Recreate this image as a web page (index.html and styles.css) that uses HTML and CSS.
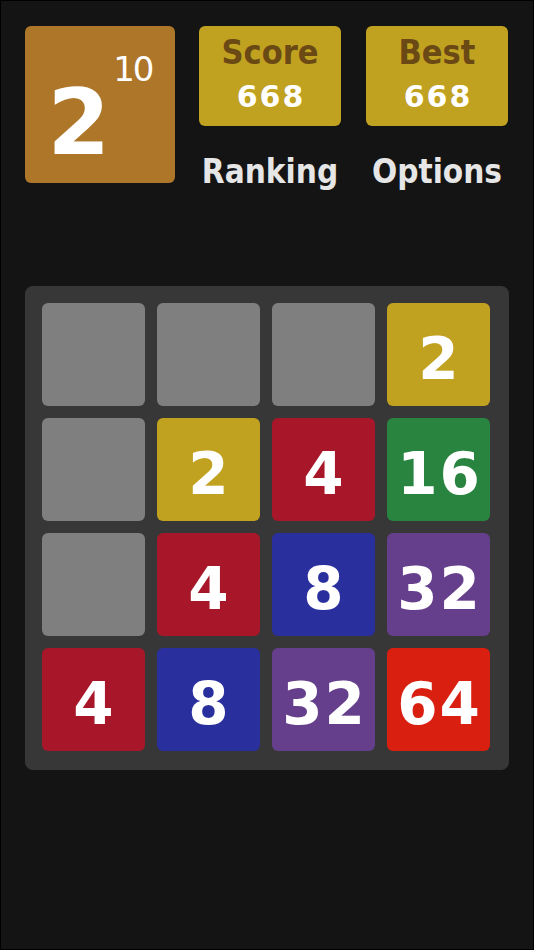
FILE: index.html
```html
<!DOCTYPE html>
<html lang="en">
<head>
    <meta charset="UTF-8">
    <meta name="viewport" content="width=device-width, initial-scale=1.0">
    <title>2048</title>
    <link rel="stylesheet" href="styles.css">
</head>
<body>
    <div class="screen">
        <div class="header">
            <div class="logo">
                <span class="logo-base">2</span>
                <span class="logo-exp">10</span>
            </div>

            <div class="stat">
                <div class="stat-box">
                    <div class="stat-label">Score</div>
                    <div class="stat-value">668</div>
                </div>
                <div class="stat-link">Ranking</div>
            </div>

            <div class="stat">
                <div class="stat-box">
                    <div class="stat-label">Best</div>
                    <div class="stat-value">668</div>
                </div>
                <div class="stat-link">Options</div>
            </div>
        </div>

        <div class="board">
            <div class="tile"></div>
            <div class="tile"></div>
            <div class="tile"></div>
            <div class="tile t2">2</div>

            <div class="tile"></div>
            <div class="tile t2">2</div>
            <div class="tile t4">4</div>
            <div class="tile t16">16</div>

            <div class="tile"></div>
            <div class="tile t4">4</div>
            <div class="tile t8">8</div>
            <div class="tile t32">32</div>

            <div class="tile t4">4</div>
            <div class="tile t8">8</div>
            <div class="tile t32">32</div>
            <div class="tile t64">64</div>
        </div>
    </div>
</body>
</html>
```

FILE: styles.css
```css
* {
    margin: 0;
    padding: 0;
    box-sizing: border-box;
}

html, body {
    background: #000;
}

body {
    font-family: 'DejaVu Sans', 'Liberation Sans', sans-serif;
    font-weight: bold;
    color: #fff;
}

.screen {
    width: 534px;
    height: 950px;
    border: 1px solid #000;
    background: #141414;
    overflow: hidden;
}

.header {
    display: flex;
    align-items: flex-start;
    margin: 25px 0 0 24px;
}

.logo {
    width: 150px;
    height: 157px;
    background: #ae7629;
    border-radius: 6px;
    display: flex;
    justify-content: center;
    align-items: flex-start;
    line-height: 1;
}

.logo-base {
    font-size: 90px;
    margin-top: 52px;
    letter-spacing: 3px;
}

.logo-exp {
    font-size: 34px;
    font-weight: normal;
    margin-top: 26px;
    letter-spacing: -2px;
}

.stat {
    width: 142px;
    margin-left: 24px;
    display: flex;
    flex-direction: column;
    align-items: center;
}

.stat + .stat {
    margin-left: 25px;
}

.stat-box {
    width: 100%;
    height: 100px;
    background: #c1a120;
    border-radius: 6px;
    display: flex;
    flex-direction: column;
    align-items: center;
    padding-top: 9px;
    line-height: 1;
}

.stat-label {
    font-family: 'DejaVu Sans Condensed', 'DejaVu Sans', sans-serif;
    font-size: 34px;
    color: #6a4915;
}

.stat-value {
    font-size: 30px;
    letter-spacing: 2px;
    padding-left: 2px;
    margin-top: 13px;
}

.stat-link {
    font-family: 'DejaVu Sans Condensed', 'DejaVu Sans', sans-serif;
    font-size: 33px;
    line-height: 1;
    color: #e6e6e6;
    margin-top: 29px;
}

.board {
    width: 484px;
    margin: 98px 0 0 24px;
    padding: 17px 19px 19px 17px;
    background: #373737;
    border-radius: 8px;
    display: grid;
    grid-template-columns: repeat(4, 1fr);
    gap: 12px;
}

.tile {
    height: 103px;
    background: #7f7f7f;
    border-radius: 6px;
    display: flex;
    justify-content: center;
    align-items: center;
    padding: 9px 0 0 2px;
    font-size: 58px;
    line-height: 1;
    letter-spacing: 2px;
}

.t2 { background: #c1a120; }
.t4 { background: #a71729; }
.t8 { background: #2a2f9e; }
.t16 { background: #298440; }
.t32 { background: #653f8b; }
.t64 { background: #d91f10; }
```
